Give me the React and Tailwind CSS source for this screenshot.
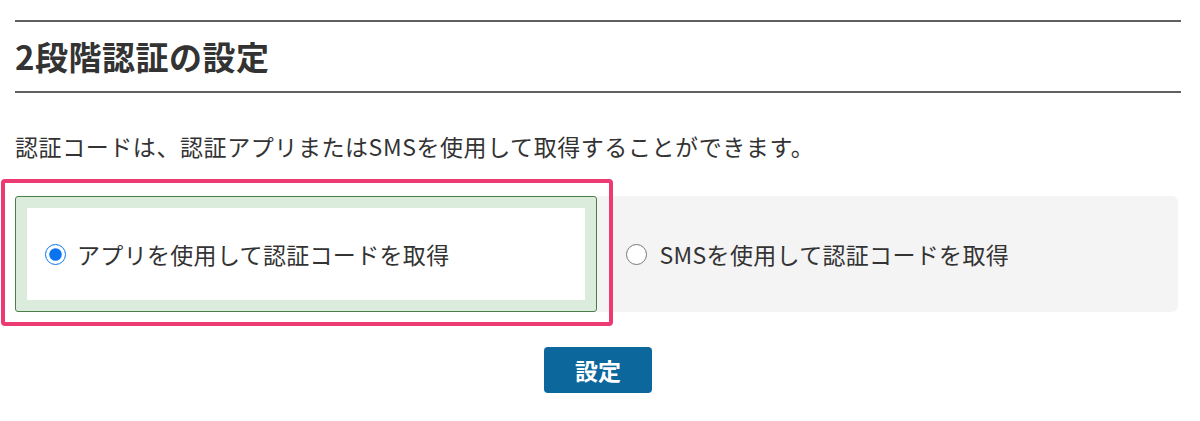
import { useState } from "react";

const font = { fontFamily: '"Noto Sans CJK JP", "Noto Sans", sans-serif' };

const TwoFactorSettings = () => {
  const [method, setMethod] = useState("app");

  return (
    <div className="pt-5 pl-[15px] pr-[19px] text-[#333333]" style={font}>
      <div className="border-t-2 border-b-2 border-[#606060] h-[73px] flex items-center">
        <h1 className="text-[33px] font-bold leading-none tracking-[0.015em]">2段階認証の設定</h1>
      </div>

      <p className="mt-[37px] text-[23px] leading-[32px] tracking-[0.025em]">
        認証コードは、認証アプリまたはSMSを使用して取得することができます。
      </p>

      <div className="mt-[34px] grid grid-cols-2 w-[1163px] h-[116px]">
        <div className="relative">
          {/* pink highlight frame */}
          <div className="absolute -left-[14px] -top-[17px] -right-[16px] -bottom-[14px] border-[4px] border-[#ec3a72] rounded-[4px] pointer-events-none" />
          <label className="h-full flex border border-[#4b7d4b] rounded-[3px] bg-[#dcecdc] p-[11px] cursor-pointer">
            <span className="flex-1 bg-white flex items-center pl-[18px] gap-[11px]">
              <input
                type="radio"
                name="method"
                checked={method === "app"}
                onChange={() => setMethod("app")}
                className="m-0 w-[21px] h-[21px] accent-[#0a74f0]"
              />
              <span className="text-[23px] leading-none tracking-[0.014em]">アプリを使用して認証コードを取得</span>
            </span>
          </label>
        </div>
        <label className="h-full flex items-center bg-[#f4f4f4] rounded-r-[6px] pl-[29px] gap-[13px] cursor-pointer">
          <input
            type="radio"
            name="method"
            checked={method === "sms"}
            onChange={() => setMethod("sms")}
            className="m-0 w-[21px] h-[21px] accent-[#0a74f0]"
          />
          <span className="text-[23px] leading-none tracking-[0.014em]">SMSを使用して認証コードを取得</span>
        </label>
      </div>

      <div className="mt-[35px] flex justify-center">
        <button className="w-[108px] h-[46px] rounded-[4px] bg-[#0b679c] text-white text-[23px] font-bold">
          設定
        </button>
      </div>
    </div>
  );
};

export default function App() {
  return <TwoFactorSettings />;
}
